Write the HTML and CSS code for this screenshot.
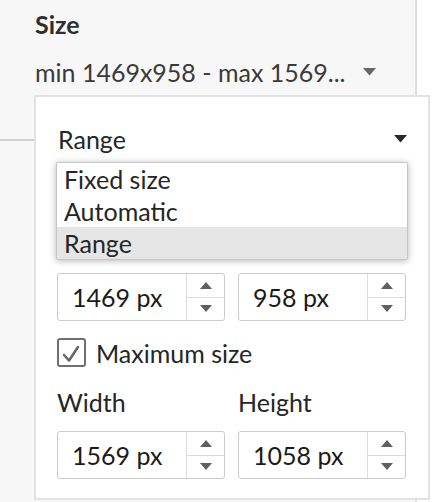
FILE: index.html
```html
<!DOCTYPE html>
<html lang="en">
<head>
<meta charset="utf-8">
<title>Size</title>
<link rel="stylesheet" href="styles.css">
</head>
<body>
<div class="page">
  <aside class="panel">
    <section class="size-section">
      <h2 class="title">Size</h2>
      <div class="summary">
        <span class="summary-text">min 1469x958 - max 1569...</span>
        <svg class="caret caret-small" width="13" height="8" viewBox="0 0 13 8"><path d="M0 0H13L6.5 7.5Z"/></svg>
      </div>
    </section>
  </aside>

  <div class="popup">
    <div class="select-row">
      <span>Range</span>
      <svg class="caret" width="13" height="8" viewBox="0 0 13 8"><path d="M0 0H13L6.5 7.5Z"/></svg>
    </div>

    <div class="covered" aria-hidden="true">
      <div class="check-row">
        <svg class="checkbox" width="29" height="29" viewBox="0 0 29 29"><rect x="1" y="1" width="27" height="27" rx="2"/></svg>
        <span>Minimum size</span>
      </div>
      <div class="labels"><span>Width</span><span>Height</span></div>
    </div>
    <div class="inputs">
      <div class="spin"><span class="value">1469 px</span><div class="arrows"><span class="up"></span><span class="down"></span></div></div>
      <div class="spin"><span class="value">958 px</span><div class="arrows"><span class="up"></span><span class="down"></span></div></div>
    </div>

    <label class="check-row">
      <svg class="checkbox" width="29" height="29" viewBox="0 0 29 29"><rect x="1" y="1" width="27" height="27" rx="2"/><path d="M7 17L12 22.5L21 9"/></svg>
      <span>Maximum size</span>
    </label>
    <div class="labels"><span>Width</span><span>Height</span></div>
    <div class="inputs">
      <div class="spin"><span class="value">1569 px</span><div class="arrows"><span class="up"></span><span class="down"></span></div></div>
      <div class="spin"><span class="value">1058 px</span><div class="arrows"><span class="up"></span><span class="down"></span></div></div>
    </div>

    <ul class="options">
      <li>Fixed size</li>
      <li>Automatic</li>
      <li class="selected">Range</li>
    </ul>
  </div>
</div>
</body>
</html>
```
FILE: styles.css
```css
* { box-sizing: border-box; }

html, body {
  margin: 0;
  padding: 0;
  background: #ffffff;
}

body {
  font-family: "Lato", "Open Sans", sans-serif;
  font-size: 25px;
  line-height: 30px;
  color: #2a2a2a;
}

.page {
  position: relative;
  width: 448px;
  height: 502px;
  overflow: hidden;
}

.panel {
  width: 417px;
  height: 502px;
  background: #f7f7f7;
  border-right: 2px solid #dedede;
}

.size-section {
  height: 141px;
  padding: 9px 0 0 35px;
  border-bottom: 2px solid #cfcfcf;
}

.title {
  margin: 0;
  font-size: 25px;
  line-height: 30px;
  font-weight: 700;
  color: #2e2e2e;
}

.summary {
  display: flex;
  align-items: center;
  gap: 17px;
  margin-top: 18px;
  color: #3a3a3a;
}

.caret path { fill: #2a2a2a; }
.caret-small path { fill: #666666; }

.popup {
  position: absolute;
  left: 34px;
  top: 95px;
  width: 396px;
  height: 405px;
  background: #ffffff;
  border: 2px solid #e2e2e2;
  padding: 27px 21px 0 21px;
  display: flex;
  flex-direction: column;
}

.select-row {
  display: flex;
  justify-content: space-between;
  align-items: center;
  height: 30px;
  padding-left: 1px;
  color: #262626;
}

.covered {
  visibility: hidden;
}

.check-row {
  display: flex;
  align-items: center;
  gap: 10px;
  height: 29px;
  margin-top: 26px;
  color: #262626;
}

.inputs + .check-row { margin-top: 17px; }

.checkbox rect {
  fill: #fff;
  stroke: #6f6f6f;
  stroke-width: 2;
}
.checkbox path {
  fill: none;
  stroke: #666;
  stroke-width: 2.6;
  stroke-linecap: round;
  stroke-linejoin: round;
}

.labels {
  display: grid;
  grid-template-columns: 168px 168px;
  column-gap: 13px;
  margin-top: 20px;
  height: 30px;
  color: #262626;
}

.inputs {
  display: grid;
  grid-template-columns: 168px 168px;
  column-gap: 13px;
  margin-top: 14px;
}

.spin {
  display: flex;
  height: 48px;
  border: 1px solid #cbcbcb;
  border-radius: 3px;
  background: #fff;
}

.value {
  flex: 1;
  display: flex;
  align-items: center;
  padding-left: 14px;
  color: #1a1a1a;
}

.arrows {
  width: 38px;
  display: flex;
  flex-direction: column;
  border-left: 1px solid #dcdcdc;
}

.up, .down {
  flex: 1;
  display: flex;
  align-items: center;
  justify-content: center;
}
.up { border-bottom: 1px solid #dcdcdc; }

.up::before, .down::before {
  content: "";
  width: 0;
  height: 0;
  border-left: 6px solid transparent;
  border-right: 6px solid transparent;
}
.up::before { border-bottom: 7px solid #606060; }
.down::before { border-top: 7px solid #606060; }

.options {
  position: absolute;
  left: 20px;
  top: 65px;
  width: 352px;
  margin: 0;
  padding: 0;
  list-style: none;
  background: #fff;
  border: 1px solid #c6c6c6;
  border-radius: 2px;
  box-shadow: 0 1px 7px rgba(0, 0, 0, 0.28);
}

.options li {
  height: 32px;
  line-height: 32px;
  padding-left: 7px;
  color: #262626;
}

.options li.selected {
  background: #e6e6e6;
}
```
